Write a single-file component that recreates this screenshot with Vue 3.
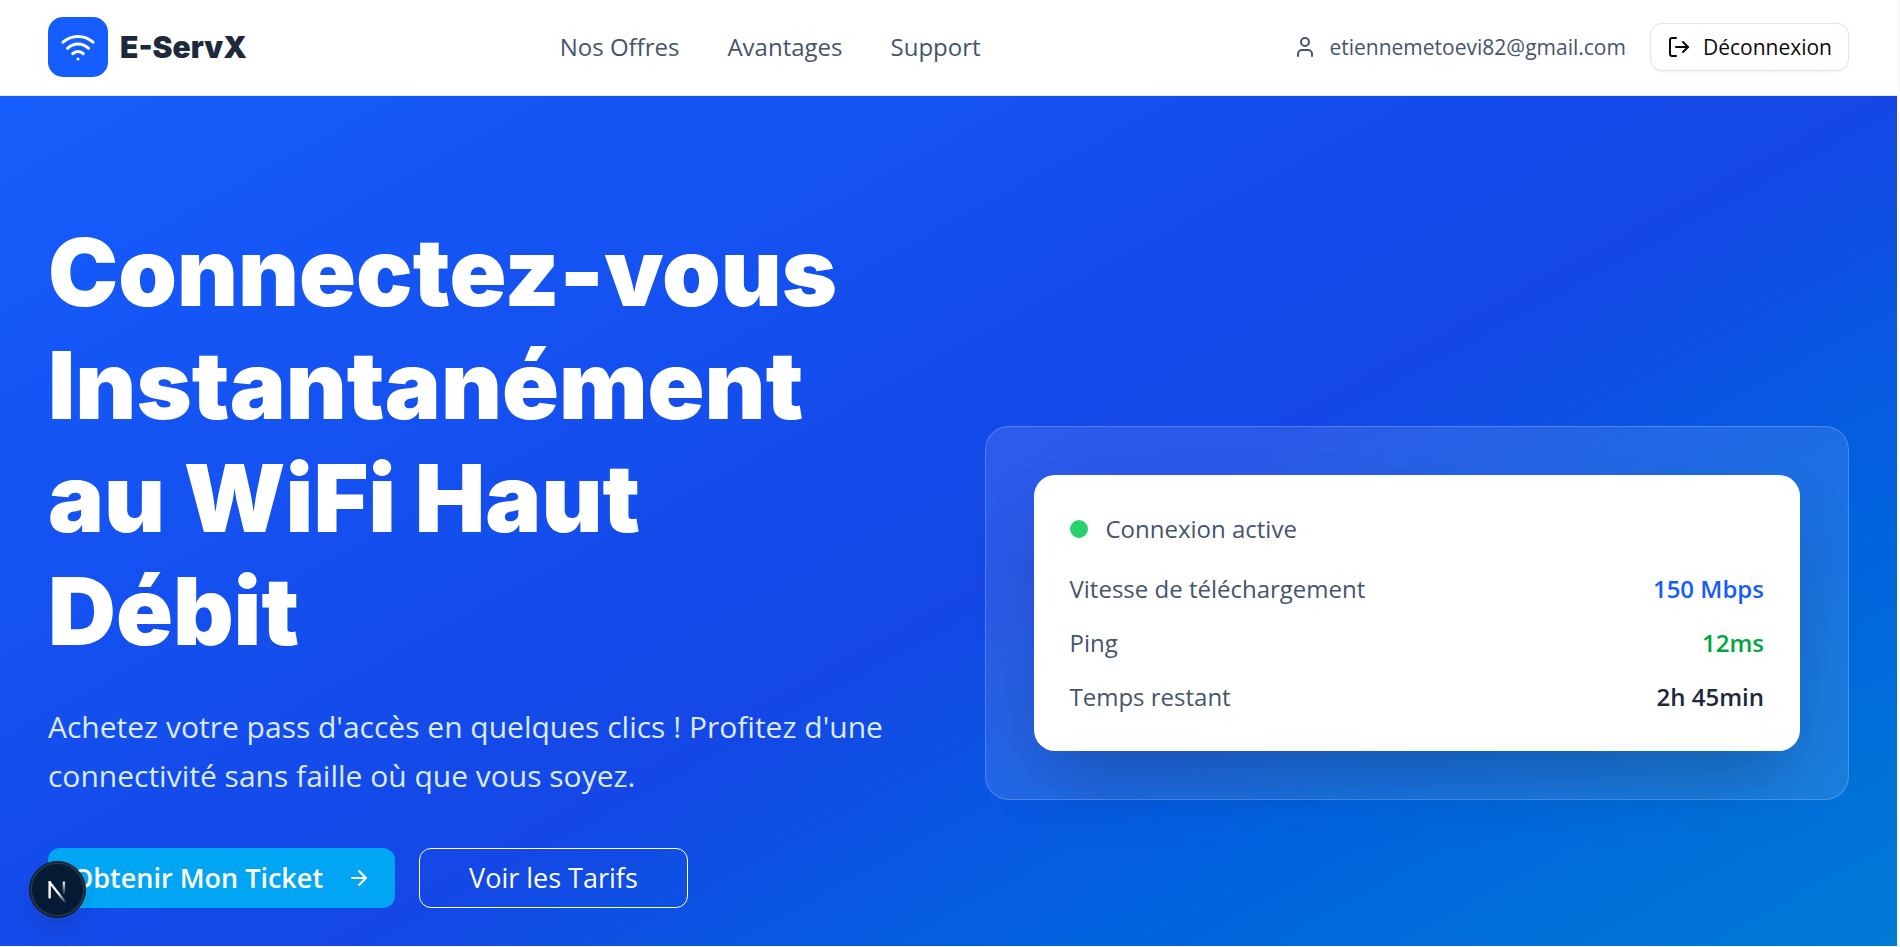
<script setup>
const links = [
  { label: 'Nos Offres', href: '#offres' },
  { label: 'Avantages', href: '#avantages' },
  { label: 'Support', href: '#support' },
]

const stats = [
  { label: 'Vitesse de téléchargement', value: '150 Mbps', tone: 'blue' },
  { label: 'Ping', value: '12ms', tone: 'green' },
  { label: 'Temps restant', value: '2h 45min', tone: 'dark' },
]
</script>

<template>
  <div class="page">
    <header class="header">
      <a class="brand" href="#">
        <span class="brand-mark">
          <svg class="icon-lg" viewBox="0 0 24 24" aria-hidden="true">
            <path d="M12 20h.01" />
            <path d="M2 8.82a15 15 0 0 1 20 0" />
            <path d="M5 12.859a10 10 0 0 1 14 0" />
            <path d="M8.5 16.429a5 5 0 0 1 7 0" />
          </svg>
        </span>
        <span class="brand-name">E-ServX</span>
      </a>

      <nav class="nav">
        <a v-for="link in links" :key="link.label" :href="link.href">{{ link.label }}</a>
      </nav>

      <div class="account">
        <div class="user">
          <svg class="icon" viewBox="0 0 24 24" aria-hidden="true">
            <path d="M19 21v-2a4 4 0 0 0-4-4H9a4 4 0 0 0-4 4v2" />
            <circle cx="12" cy="7" r="4" />
          </svg>
          <span>etiennemetoevi82@gmail.com</span>
        </div>
        <button class="logout" type="button">
          <svg class="icon" viewBox="0 0 24 24" aria-hidden="true">
            <path d="m16 17 5-5-5-5" />
            <path d="M21 12H9" />
            <path d="M9 21H5a2 2 0 0 1-2-2V5a2 2 0 0 1 2-2h4" />
          </svg>
          Déconnexion
        </button>
      </div>
    </header>

    <main class="hero">
      <section class="intro">
        <h1>Connectez-vous<br />Instantanément<br />au WiFi Haut<br />Débit</h1>
        <p>
          Achetez votre pass d'accès en quelques clics ! Profitez d'une connectivité sans faille où
          que vous soyez.
        </p>
        <div class="actions">
          <button class="cta primary" type="button">
            Obtenir Mon Ticket
            <svg class="icon" viewBox="0 0 24 24" aria-hidden="true">
              <path d="M5 12h14" />
              <path d="m12 5 7 7-7 7" />
            </svg>
          </button>
          <button class="cta outline" type="button">Voir les Tarifs</button>
        </div>
      </section>

      <section class="glass">
        <div class="status">
          <div class="status-head">
            <span class="dot"></span>
            <span>Connexion active</span>
          </div>
          <dl class="stats">
            <div v-for="stat in stats" :key="stat.label" class="stat">
              <dt>{{ stat.label }}</dt>
              <dd :class="stat.tone">{{ stat.value }}</dd>
            </div>
          </dl>
        </div>
      </section>
    </main>

    <button class="dev-badge" type="button" aria-label="Next.js">
      <svg viewBox="0 0 56 56" fill="none" aria-hidden="true">
        <defs>
          <linearGradient id="diag" gradientUnits="userSpaceOnUse" x1="29" y1="31" x2="37" y2="42">
            <stop stop-color="#fff" />
            <stop offset="1" stop-color="#fff" stop-opacity="0" />
          </linearGradient>
          <linearGradient id="stem" gradientUnits="userSpaceOnUse" x1="34" y1="19" x2="34" y2="34">
            <stop stop-color="#fff" />
            <stop offset="1" stop-color="#fff" stop-opacity="0" />
          </linearGradient>
        </defs>
        <path d="M19.500 20L36 41" stroke="url(#diag)" stroke-width="2.400" />
        <path d="M20 37V19.500" stroke="#fff" stroke-width="2.400" />
        <path d="M34.500 20V33" stroke="url(#stem)" stroke-width="2.400" />
      </svg>
    </button>
  </div>
</template>

<style>
body {
  margin: 0;
  background: #f9fafb;
}
</style>

<style scoped>
.page {
  box-sizing: border-box;
  height: calc(100vh - 1px);
  margin-right: 3px;
  overflow: hidden;
  font-family: 'Open Sans', 'Noto Sans', sans-serif;
  font-size: 24px;
  line-height: 36px;
  color: #45556c;
}

a {
  color: inherit;
  text-decoration: none;
}

button {
  font: inherit;
  cursor: pointer;
}

svg {
  flex: none;
  fill: none;
  stroke-linecap: round;
  stroke-linejoin: round;
}

.icon,
.icon-lg {
  width: 24px;
  height: 24px;
  stroke: currentColor;
  stroke-width: 2;
}

.icon-lg {
  width: 36px;
  height: 36px;
}

.header {
  display: flex;
  align-items: center;
  justify-content: space-between;
  padding: 17px 48px 18px;
  background: #fff;
  border-bottom: 1px solid #e2e8f0;
}

.brand {
  display: flex;
  align-items: center;
  gap: 12px;
}

.brand-mark {
  display: grid;
  place-items: center;
  width: 60px;
  height: 60px;
  border-radius: 15px;
  background: #155dfc;
  color: #fff;
}

.brand-name {
  font-family: Inter, sans-serif;
  font-size: 30px;
  font-weight: 900;
  color: #1d293d;
}

.nav {
  display: flex;
  gap: 48px;
}

.account,
.user {
  display: flex;
  align-items: center;
  gap: 24px;
  font-size: 21px;
  line-height: 30px;
}

.user {
  gap: 12px;
}

.logout {
  display: flex;
  align-items: center;
  gap: 12px;
  height: 48px;
  padding: 0 16px;
  border: 1px solid #e5e5e5;
  border-radius: 12px;
  background: #fff;
  box-shadow: 0 1px 3px rgba(0, 0, 0, 0.06);
  color: #0a0a0a;
  font-weight: 500;
}

.hero {
  display: grid;
  grid-template-columns: 1fr 1fr;
  align-items: center;
  gap: 72px;
  padding: 120px 48px;
  background: linear-gradient(to bottom right in oklab, #155dfc, #1447e6, #0084d1);
}

.intro {
  padding-bottom: 102px;
}

h1 {
  margin: 0 0 34px;
  font-family: Inter, sans-serif;
  font-size: 94px;
  font-weight: 900;
  line-height: 113px;
  color: #fff;
}

.intro p {
  margin: 0 0 48px;
  font-size: 30px;
  line-height: 49px;
  color: #dbeafe;
}

.actions {
  display: flex;
  gap: 24px;
}

.cta {
  display: flex;
  align-items: center;
  gap: 24px;
  height: 60px;
  padding: 0 24px;
  border: 0;
  border-radius: 12px;
  font-size: 27px;
  color: #fff;
}

.primary {
  background: #00a6f4;
  font-weight: 600;
}

.outline {
  padding: 0 49px;
  border: 1px solid #fff;
  background: transparent;
  font-weight: 500;
}

.glass {
  padding: 48px;
  border: 1px solid rgba(255, 255, 255, 0.2);
  border-radius: 24px;
  background: rgba(255, 255, 255, 0.1);
}

.status {
  padding: 36px;
  border-radius: 21px;
  background: #fff;
  box-shadow: 0 36px 72px -18px rgba(0, 0, 0, 0.25);
}

.status-head {
  display: flex;
  align-items: center;
  gap: 18px;
  margin-bottom: 24px;
  font-weight: 500;
}

.dot {
  width: 18px;
  height: 18px;
  border-radius: 50%;
  background: #28d16b;
}

.stats {
  display: grid;
  gap: 18px;
  margin: 0;
}

.stat {
  display: flex;
  justify-content: space-between;
}

dd {
  margin: 0;
  font-weight: 600;
}

.blue {
  color: #155dfc;
}

.green {
  color: #00a63e;
}

.dark {
  color: #1d293d;
}

.dev-badge {
  position: fixed;
  left: 29px;
  bottom: 29px;
  width: 57px;
  height: 57px;
  padding: 0;
  border: 1px solid #171717;
  border-radius: 50%;
  background: #051a33;
  box-shadow: inset 0 0 0 2px #243548, 0 16px 32px -8px rgba(0, 0, 0, 0.16);
}

.dev-badge svg {
  display: block;
  width: 100%;
  height: 100%;
  stroke-linecap: butt;
}
</style>
